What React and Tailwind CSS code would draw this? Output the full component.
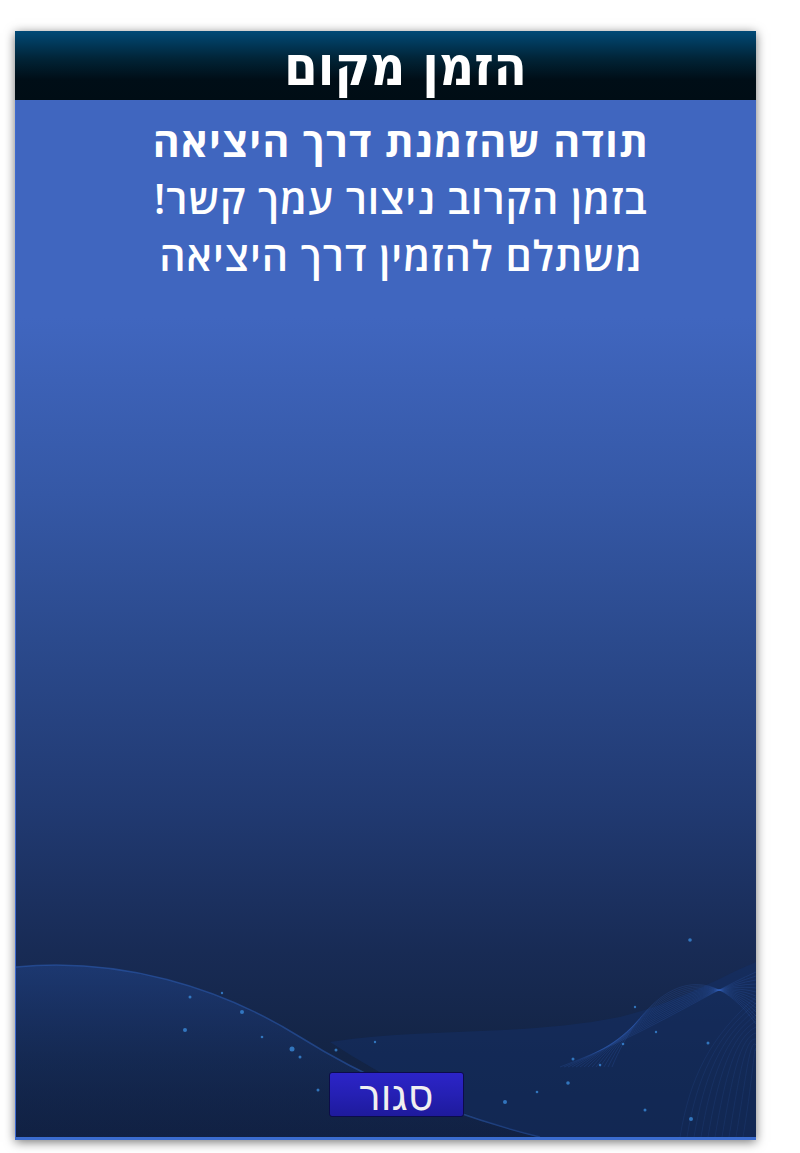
import React from 'react';

const DOTS = [
  [190, 1000, 1.5], [242, 1015, 2], [292, 1052, 2.5], [262, 1040, 1.3], [300, 1060, 1.5],
  [185, 1033, 2], [222, 996, 1.2], [357, 1078, 1.3], [406, 1108, 2], [336, 1053, 1.5],
  [318, 1093, 1.5], [375, 1045, 1.2], [505, 1105, 2], [568, 1086, 1.8], [573, 1062, 1.5],
  [645, 1113, 1.5], [690, 943, 1.8], [717, 937, 1.8], [623, 1047, 1.3], [691, 1122, 2],
  [635, 1010, 1.2], [537, 1095, 1.3], [600, 1068, 1.2], [656, 1035, 1.2], [708, 1046, 1.5],
];

function WaveArt() {
  return (
    <svg className="absolute inset-x-0 bottom-0 h-[200px] w-full" viewBox="16 940 740 200" preserveAspectRatio="none">
      <defs>
        <linearGradient id="band" x1="0" y1="0" x2="0" y2="1">
          <stop offset="0" stopColor="#1f3f80" stopOpacity="0.65" />
          <stop offset="1" stopColor="#102550" stopOpacity="0.2" />
        </linearGradient>
      </defs>
      <path d="M16 970 C 120 960, 220 990, 300 1040 C 380 1090, 460 1120, 540 1140 L 16 1140 Z" fill="url(#band)" />
      <path d="M16 970 C 120 960, 220 990, 300 1040 C 380 1090, 460 1120, 540 1140" fill="none" stroke="#2c5bb0" strokeOpacity="0.55" strokeWidth="1.5" />
      <path d="M330 1045 C 420 1030, 520 1040, 620 1020 C 680 1005, 720 980, 756 965 L 756 1140 L 540 1140 C 460 1120, 400 1090, 330 1045 Z" fill="#14306a" fillOpacity="0.45" />
      {Array.from({ length: 14 }).map((_, i) => (
        <path
          key={i}
          d={`M${560 + i * 4} 1070 C ${640} ${1040 - i * 3}, ${700} ${1000 - i * 4}, 756 ${975 + i * 4}`}
          fill="none"
          stroke="#3a6fd0"
          strokeOpacity="0.22"
          strokeWidth="0.8"
        />
      ))}
      {Array.from({ length: 10 }).map((_, i) => (
        <path
          key={'v' + i}
          d={`M${680 + i * 7} 1140 C ${690 + i * 7} 1080, ${710 + i * 5} 1040, 756 ${1000 + i * 6}`}
          fill="none"
          stroke="#3a6fd0"
          strokeOpacity="0.15"
          strokeWidth="0.8"
        />
      ))}
      {DOTS.map(([x, y, r], i) => (
        <circle key={i} cx={x} cy={y} r={r} fill="#3c8fe0" fillOpacity="0.75" />
      ))}
    </svg>
  );
}

export default function App() {
  return (
    <div className="w-[800px] h-[1153px] bg-white pt-[31px] pl-[15px]">
      <div className="w-[741px] h-[1109px] flex flex-col shadow-[0_2px_10px_rgba(0,0,0,0.55)]">
        <div className="h-[69px] flex items-center justify-center pl-[40px] bg-[linear-gradient(to_bottom,#014a77_0%,#012437_40%,#000e17_70%,#000d15_100%)]">
          <h1 dir="rtl" className="text-white font-bold text-[54px] leading-none font-['DejaVu_Sans_Condensed','DejaVu_Sans',sans-serif] mt-[2px]">
            הזמן מקום
          </h1>
        </div>
        <div className="relative flex-1 flex flex-col overflow-hidden border-l border-[#3d6ad0] border-b-[3px] border-b-[#3b6ccf] bg-[linear-gradient(to_bottom,#4066bf_0%,#4066bf_21%,#3558a6_38%,#2b4a8d_52%,#213a72_68%,#182b55_82%,#132445_92%,#112040_100%)]">
          <div dir="rtl" className="relative flex flex-col items-center pl-[30px] pt-[13px] text-white font-['Open_Sans','DejaVu_Sans',sans-serif] text-[41px] leading-[57px] tracking-[1px]">
            <p className="font-bold tracking-[1.4px]">תודה שהזמנת דרך היציאה</p>
            <p className="font-semibold">בזמן הקרוב ניצור עמך קשר!</p>
            <p className="font-semibold">משתלם להזמין דרך היציאה</p>
          </div>
          <WaveArt />
          <div className="relative mt-auto mb-[20px] flex justify-center pl-[20px]">
            <button dir="rtl" className="w-[135px] h-[45px] rounded-[3px] border border-[#0c0c4a] bg-[linear-gradient(to_bottom,#2c24c8_0%,#2520b4_50%,#1e1a9c_100%)] text-[#f0f0f0] text-[44px] leading-none font-['DejaVu_Sans_Condensed','DejaVu_Sans',sans-serif] flex items-center justify-center">
              סגור
            </button>
          </div>
        </div>
      </div>
    </div>
  );
}
